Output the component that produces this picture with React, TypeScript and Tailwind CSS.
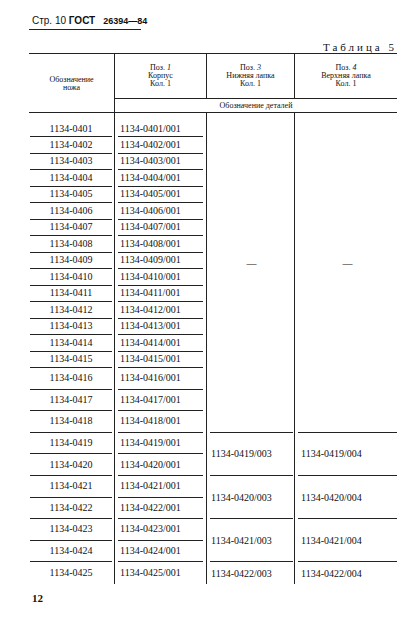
import React, { Fragment } from "react";

const rows = [
  "0401", "0402", "0403", "0404", "0405", "0406", "0407", "0408", "0409",
  "0410", "0411", "0412", "0413", "0414", "0415", "0416", "0417", "0418",
  "0419", "0420", "0421", "0422", "0423", "0424", "0425",
];

export default function App() {
  return (
    <div className="w-[419px] h-[625px] bg-white text-[#111] overflow-hidden font-['Liberation_Serif',serif]">
      <div className="pt-[14px] pl-[29px]">
        <div className="w-[112px] border-b border-[#222] pl-[3px] pb-[1px] font-['Liberation_Sans',sans-serif] text-[10px] leading-[14px] whitespace-nowrap">
          Стр. 10 <span className="font-bold">ГОСТ</span>
          <span className="ml-[8px] font-bold text-[9px]">26394—84</span>
        </div>
        <div className="w-[368px] mt-[12px] text-right text-[11px] leading-[11px] tracking-[3px] mr-[-3px]">
          Таблица 5
        </div>
        <div className="grid w-[368px] grid-cols-[85px_92px_88px_103px] grid-rows-[45px_14px_24px_repeat(14,16.5px)_repeat(10,21.6px)] border-t border-[#222]">
          <div className="col-start-1 row-start-1 row-span-2 border-b border-[#222] flex items-center justify-center text-center text-[8px] leading-[8px] pt-[2px]">
            Обозначение
            <br />
            ножа
          </div>
          <div className="col-start-2 row-start-1 border-l border-b border-[#222] flex items-center justify-center text-center text-[8px] leading-[8px]">
            <div>
              Поз. <i>1</i>
              <br />
              Корпус
              <br />
              Кол. 1
            </div>
          </div>
          <div className="col-start-3 row-start-1 border-l border-b border-[#222] flex items-center justify-center text-center text-[8px] leading-[8px]">
            <div>
              Поз. <i>3</i>
              <br />
              Нижняя лапка
              <br />
              Кол. 1
            </div>
          </div>
          <div className="col-start-4 row-start-1 border-l border-b border-[#222] flex items-center justify-center text-center text-[8px] leading-[8px]">
            <div>
              Поз. <i>4</i>
              <br />
              Верхняя лапка
              <br />
              Кол. 1
            </div>
          </div>
          <div className="col-start-2 col-span-3 row-start-2 border-l border-b border-[#222] flex items-center justify-center text-[8px] leading-[8px]">
            Обозначение деталей
          </div>

          <div className="col-start-3 row-start-3 row-span-18 border-l border-[#222] flex">
            <div className="flex-1 ml-[3px] mr-[1px] border-b border-[#222] flex items-center justify-center pb-[18px] text-[10px]">
              —
            </div>
          </div>
          <div className="col-start-4 row-start-3 row-span-18 border-l border-[#222] flex">
            <div className="flex-1 ml-[3px] border-b border-[#222] flex items-center justify-center pb-[18px] text-[10px]">
              —
            </div>
          </div>

          <div className="col-start-3 row-start-21 row-span-2 border-l border-[#222] flex">
            <div className="flex-1 ml-[3px] mr-[1px] border-b border-[#222] flex items-center pl-[1px] text-[10px]">
              1134-0419/003
            </div>
          </div>
          <div className="col-start-3 row-start-23 row-span-2 border-l border-[#222] flex">
            <div className="flex-1 ml-[3px] mr-[1px] border-b border-[#222] flex items-center pl-[1px] text-[10px]">
              1134-0420/003
            </div>
          </div>
          <div className="col-start-3 row-start-25 row-span-2 border-l border-[#222] flex">
            <div className="flex-1 ml-[3px] mr-[1px] border-b border-[#222] flex items-center pl-[1px] text-[10px]">
              1134-0421/003
            </div>
          </div>
          <div className="col-start-3 row-start-27 row-span-1 border-l border-[#222] flex">
            <div className="flex-1 ml-[3px] flex items-center pl-[1px] text-[10px]">
              1134-0422/003
            </div>
          </div>

          <div className="col-start-4 row-start-21 row-span-2 border-l border-[#222] flex">
            <div className="flex-1 ml-[3px] border-b border-[#222] flex items-center pl-[3px] text-[10px]">
              1134-0419/004
            </div>
          </div>
          <div className="col-start-4 row-start-23 row-span-2 border-l border-[#222] flex">
            <div className="flex-1 ml-[3px] border-b border-[#222] flex items-center pl-[3px] text-[10px]">
              1134-0420/004
            </div>
          </div>
          <div className="col-start-4 row-start-25 row-span-2 border-l border-[#222] flex">
            <div className="flex-1 ml-[3px] border-b border-[#222] flex items-center pl-[3px] text-[10px]">
              1134-0421/004
            </div>
          </div>
          <div className="col-start-4 row-start-27 row-span-1 border-l border-[#222] flex">
            <div className="flex-1 ml-[3px] flex items-center pl-[3px] text-[10px]">
              1134-0422/004
            </div>
          </div>

          {rows.map((r, i) => {
            const last = i === rows.length - 1;
            return (
              <Fragment key={r}>
                <div className="col-start-1 flex">
                  <div
                    className={
                      "flex-1 ml-[1px] mr-[2px] flex items-center justify-center text-[10px] leading-[10px] " +
                      (last ? "" : "border-b border-[#222] ") +
                      (i === 0 ? "pt-[8px]" : "")
                    }
                  >
                    1134-{r}
                  </div>
                </div>
                <div className="col-start-2 border-l border-[#222] flex">
                  <div
                    className={
                      "flex-1 ml-[3px] mr-[3px] pl-[2px] flex items-center text-[10px] leading-[10px] " +
                      (last ? "" : "border-b border-[#222] ") +
                      (i === 0 ? "pt-[8px]" : "")
                    }
                  >
                    1134-{r}/001
                  </div>
                </div>
              </Fragment>
            );
          })}
        </div>
        <div className="mt-[8px] pl-[3px] text-[11px] leading-[12px] font-bold">12</div>
      </div>
    </div>
  );
}
